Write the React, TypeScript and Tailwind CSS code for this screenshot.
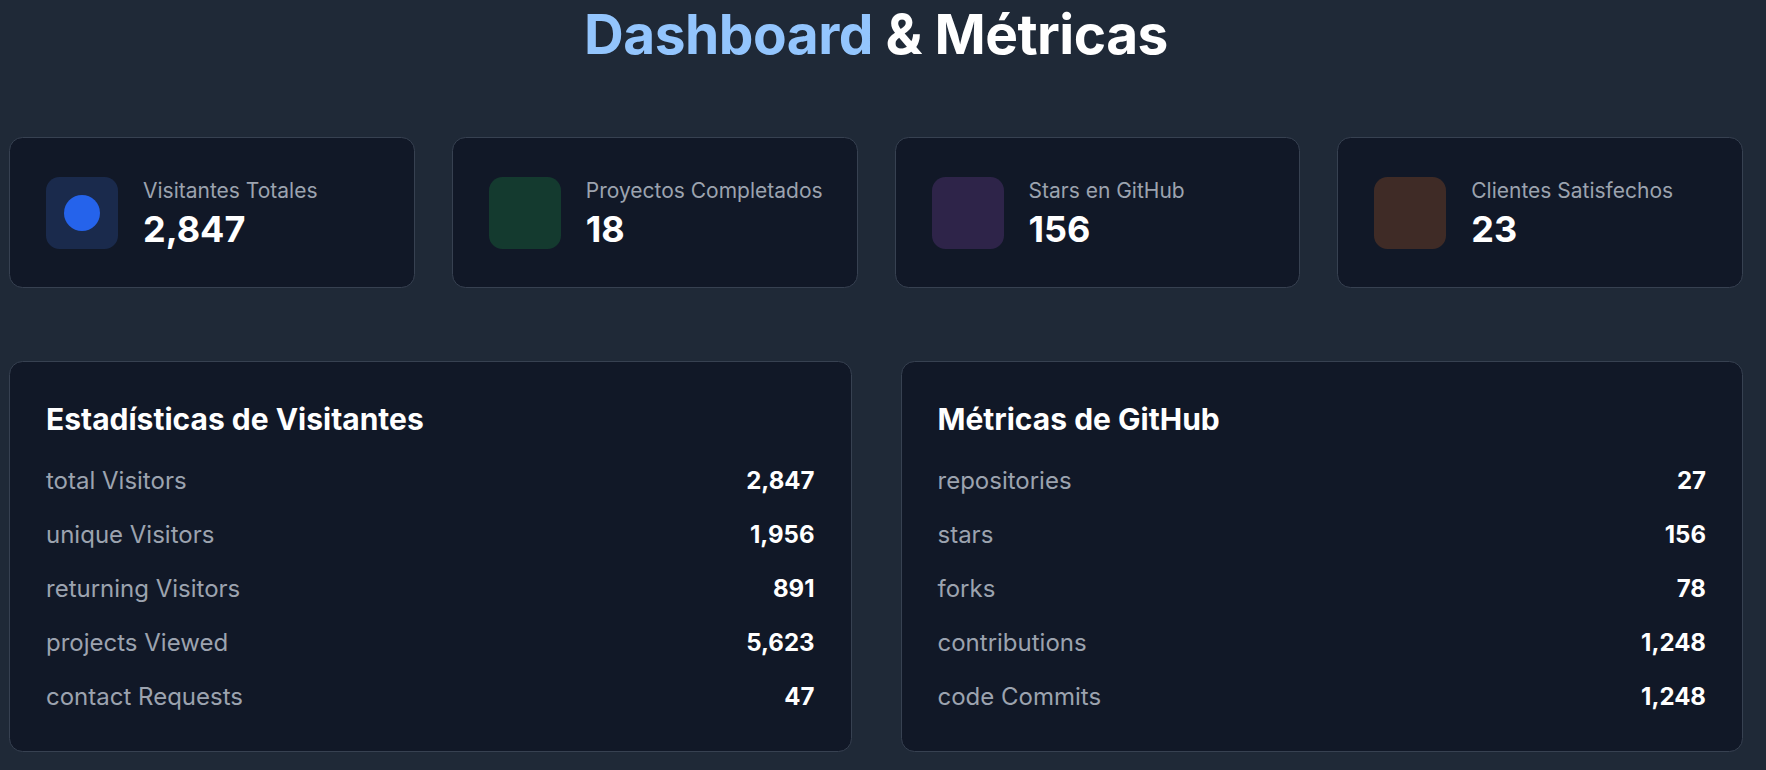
import React from "react";

const stats = [
  { label: "Visitantes Totales", value: "2,847", box: "bg-[#1a2a4c]", dot: true },
  { label: "Proyectos Completados", value: "18", box: "bg-[#143a2f]", dot: false },
  { label: "Stars en GitHub", value: "156", box: "bg-[#2e2449]", dot: false },
  { label: "Clientes Satisfechos", value: "23", box: "bg-[#3f2b26]", dot: false },
];

const visitors = [
  ["total Visitors", "2,847"],
  ["unique Visitors", "1,956"],
  ["returning Visitors", "891"],
  ["projects Viewed", "5,623"],
  ["contact Requests", "47"],
];

const github = [
  ["repositories", "27"],
  ["stars", "156"],
  ["forks", "78"],
  ["contributions", "1,248"],
  ["code Commits", "1,248"],
];

function Panel({ title, rows }: { title: string; rows: string[][] }) {
  return (
    <div className="flex-1 rounded-[13.5px] border border-[#374151] bg-[#111827] px-[36px] pt-[39px] pb-[38px]">
      <h2 className="text-[30px] leading-[36px] font-bold text-white">{title}</h2>
      <div className="mt-[28px] flex flex-col gap-[22px]">
        {rows.map(([k, v]) => (
          <div key={k} className="flex items-center justify-between text-[24px] leading-[32px]">
            <span className="text-[#9ca3af]">{k}</span>
            <span className="font-bold text-white">{v}</span>
          </div>
        ))}
      </div>
    </div>
  );
}

export default function App() {
  return (
    <div
      className="min-h-screen bg-[#1f2937] pl-[9px] pr-[23px] pb-[20px]"
      style={{ fontFamily: "Inter, 'Noto Sans', sans-serif" }}
    >
      <h1 className="pt-[6px] text-center text-[55px] leading-[56px] font-bold tracking-[-0.5px] text-white">
        <span className="text-[#93c5fd]">Dashboard</span> &amp; Métricas
      </h1>
      <div className="mt-[75px] flex gap-[37px]">
        {stats.map((s) => (
          <div
            key={s.label}
            className="flex h-[151px] min-w-0 flex-1 items-center gap-[25px] rounded-[13.5px] border border-[#374151] bg-[#111827] px-[36px]"
          >
            <div className={`flex h-[72px] w-[72px] shrink-0 items-center justify-center rounded-[13.5px] ${s.box}`}>
              {s.dot && <div className="h-[36px] w-[36px] rounded-full bg-[#2563eb]" />}
            </div>
            <div className="flex flex-col gap-[4px] whitespace-nowrap">
              <span className="text-[21px] leading-[28px] text-[#9ca3af]">{s.label}</span>
              <span className="text-[36px] leading-[40px] font-bold text-white">{s.value}</span>
            </div>
          </div>
        ))}
      </div>
      <div className="mt-[73px] flex gap-[49px]">
        <Panel title="Estadísticas de Visitantes" rows={visitors} />
        <Panel title="Métricas de GitHub" rows={github} />
      </div>
    </div>
  );
}
